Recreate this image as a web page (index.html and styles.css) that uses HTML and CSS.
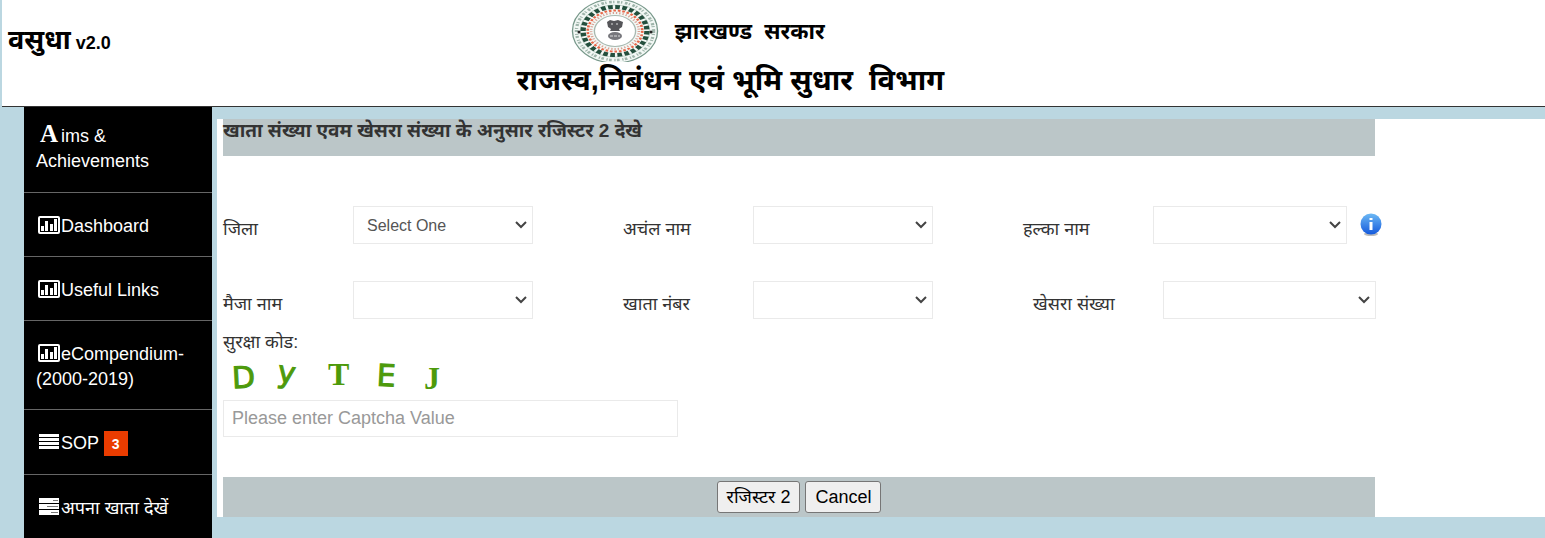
FILE: index.html
```html
<!DOCTYPE html>
<html lang="hi">
<head>
    <meta charset="UTF-8">
    <meta name="viewport" content="width=device-width, initial-scale=1.0">
    <title>वसुधा v2.0</title>
    <link rel="stylesheet" href="styles.css">
</head>
<body>

    <!-- shared icons -->
    <svg class="sprite" width="0" height="0">
        <symbol id="chart" viewBox="0 0 22 18">
            <rect x="1" y="1" width="20" height="16" rx="1" fill="none" stroke="#fff" stroke-width="2"/>
            <path d="M3 10h3v5H3zM7 5h3v10H7zM12 8h3v7h-3zM16 3h3v12h-3z" fill="#fff"/>
        </symbol>
        <symbol id="justify" viewBox="0 0 22 18">
            <path d="M1 1h20v3H1zM1 5h20v3H1zM1 9h20v3H1zM1 13h20v3H1z" fill="#fff"/>
        </symbol>
        <symbol id="tasks" viewBox="0 0 22 18">
            <path d="M1 0h20v5H1zM1 6h20v5H1zM1 12h20v5H1z" fill="#fff"/>
            <path d="M15 2.500h5M9 8.500h11M13 14.500h7" stroke="#777" stroke-width="1"/>
        </symbol>
    </svg>

    <!-- Header -->
    <header class="header">
        <div class="brand"><span class="brand-name">वसुधा</span> <span class="version">v2.0</span></div>
        <div class="title">
            <div class="title-top">
                <svg class="emblem" viewBox="0 0 88 62" role="img" aria-label="झारखण्ड सरकार">
                    <g transform="translate(44 31)">
                        <g transform="scale(1.33 1)" fill="none">
                            <circle r="32" fill="#f3f8f5" stroke="#77988a" stroke-width="1"/>
                            <circle r="29" stroke="#9fb5ab" stroke-width="2.500" stroke-dasharray="2 1 1 2"/>
                            <circle r="26" stroke="#c6d6ce" stroke-width="1"/>
                            <circle r="24" stroke="#244f3d" stroke-width="4" stroke-dasharray="3.500 1.885"/>
                            <circle r="20.500" stroke="#e8684a" stroke-width="2" stroke-dasharray="2 1.400"/>
                            <circle r="18" stroke="#d9a093" stroke-width="2" stroke-dasharray="1 1.500"/>
                            <circle r="15.500" fill="#fff" stroke="#a9b9b1" stroke-width="1"/>
                        </g>
                        <path d="M-8-9l3-2 4 1 4-1 5 2-1 5-3 2h-8l-3-2zM-4-2h8l1 2H-5z" fill="#555559"/>
                        <ellipse cy="5" rx="7" ry="4" fill="#77777c"/>
                        <path d="M-5 5h3M-1 5h3M3 5h2M-4-7h2M1-7h2" stroke="#ddd"/>
                        <circle cx="-36" cy="1" r="1.500" fill="#222"/>
                        <circle cx="36" cy="1" r="1.500" fill="#222"/>
                    </g>
                </svg>
                <span class="state">झारखण्ड&nbsp; सरकार</span>
            </div>
            <h1>राजस्व,निबंधन एवं भूमि सुधार&nbsp; विभाग</h1>
        </div>
    </header>

    <div class="page">
        <!-- Menu -->
        <nav class="sidebar">
            <a class="first" href="#"><span class="letter">A</span>ims &amp; Achievements</a>
            <a href="#"><svg class="icon"><use href="#chart"/></svg>Dashboard</a>
            <a href="#"><svg class="icon"><use href="#chart"/></svg>Useful Links</a>
            <a href="#"><svg class="icon"><use href="#chart"/></svg>eCompendium-(2000-2019)</a>
            <a href="#"><svg class="icon"><use href="#justify"/></svg>SOP <span class="badge">3</span></a>
            <a href="#"><svg class="icon"><use href="#tasks"/></svg>अपना खाता देखें</a>
        </nav>

        <!-- Form -->
        <main class="content">
            <form>
                <h2 class="bar">खाता संख्या एवम खेसरा संख्या के अनुसार रजिस्टर 2 देखे</h2>
                <div class="fields">
                    <div class="field">
                        <label for="district">जिला</label>
                        <select id="district"><option>Select One</option></select>
                    </div>
                    <div class="field">
                        <label for="circle">अचंल नाम</label>
                        <select id="circle"></select>
                    </div>
                    <div class="field halka">
                        <label for="halka">हल्का नाम</label>
                        <select id="halka"></select>
                        <svg class="info" viewBox="0 0 22 24">
                            <defs>
                                <linearGradient id="blue" x1="0" y1="0" x2="0" y2="1">
                                    <stop offset="0" stop-color="#6db9f4"/>
                                    <stop offset="1" stop-color="#1459dc"/>
                                </linearGradient>
                            </defs>
                            <ellipse cx="11" cy="21" rx="7" ry="2" fill="#bbb"/>
                            <circle cx="11" cy="11" r="10.500" fill="url(#blue)"/>
                            <path d="M9.500 5h3v2h-3zM9.500 9h3v8h-3z" fill="#fff"/>
                        </svg>
                    </div>
                    <div class="field">
                        <label for="mauja">मैजा नाम</label>
                        <select id="mauja"></select>
                    </div>
                    <div class="field">
                        <label for="khata">खाता नंबर</label>
                        <select id="khata"></select>
                    </div>
                    <div class="field khesra">
                        <label for="khesra">खेसरा संख्या</label>
                        <select id="khesra"></select>
                    </div>
                </div>

                <div class="captcha">
                    <label for="code">सुरक्षा कोड:</label>
                    <svg class="captcha-code" viewBox="0 0 230 40">
                        <text x="9" y="33" transform="rotate(-3 20 22)" class="sans">D</text>
                        <text x="54" y="28" transform="rotate(8 64 24)" class="sans">y</text>
                        <text x="105" y="30" class="serif">T</text>
                        <text x="154" y="31" transform="rotate(3 165 17)" class="sans">E</text>
                        <text x="201" y="34" class="serif">J</text>
                    </svg>
                    <input id="code" type="text" placeholder="Please enter Captcha Value">
                </div>

                <div class="bar actions">
                    <button type="submit">रजिस्टर 2</button>
                    <button type="button">Cancel</button>
                </div>
            </form>
        </main>
    </div>

</body>
</html>
```

FILE: styles.css
```css
* {
    box-sizing: border-box;
}
body {
    margin: 0;
    padding-left: 2px;
    background: #bbd7e1;
    color: #333;
    font-family: "Liberation Sans", Arial, "Noto Sans", sans-serif;
    font-size: 18px;
    line-height: 25px;
    overflow: hidden;
}
.sprite {
    display: block;
}
/* Header */
.header {
    display: grid;
    grid-template-columns: 1fr auto 1fr;
    height: 107px;
    background: #fff;
    border-bottom: 1px solid #333;
    color: #000;
    font-weight: bold;
}
.brand {
    padding: 24px 6px;
    line-height: 32px;
}
.brand-name {
    font-size: 27px;
}
.title {
    padding-right: 86px;
}
.title-top {
    display: flex;
    align-items: center;
    padding-left: 54px;
    gap: 16px;
    height: 62px;
}
.emblem {
    width: 88px;
    height: 62px;
}
.state {
    font-size: 22px;
}
h1 {
    margin: 0;
    font-size: 29px;
    line-height: 36px;
}
/* Sidebar */
.page {
    display: flex;
    align-items: flex-start;
    padding-left: 22px;
}
.sidebar {
    flex: 0 0 188px;
    background: #000;
}
.sidebar a {
    display: block;
    padding: 21px 12px 17px;
    border-bottom: 1px solid #666;
    color: #fff;
    text-decoration: none;
}
.sidebar .first {
    padding: 17px 12px 18px;
}
.letter {
    display: inline-block;
    margin: 0 3px 0 4px;
    font: bold 25px/20px "Liberation Serif", serif;
}
.icon {
    width: 22px;
    height: 18px;
    margin: 0 1px 0 2px;
    vertical-align: -2px;
}
.badge {
    padding: 5px 8px 4px;
    background: #ea3c00;
    font-size: 14px;
    font-weight: bold;
}
/* Content */
.content {
    flex: 1;
    margin: 12px 0 0 5px;
    padding-left: 6px;
    background: #fff;
}
.bar {
    margin: 0 170px 0 0;
    background: #bbc6c8;
}
h2 {
    height: 37px;
    font-size: 19px;
    line-height: 24px;
}
.fields {
    display: grid;
    grid-template-columns: repeat(3, 1fr);
    row-gap: 37px;
    margin: 50px 122px 0 0;
}
.field {
    display: flex;
    align-items: center;
}
.field label {
    flex: 0 0 130px;
    padding-top: 8px;
}
select, input {
    height: 38px;
    border: 1px solid #eaeaea;
    background: #fff;
    color: #555;
    font-family: inherit;
}
select {
    width: 180px;
    padding: 0 24px 0 13px;
    appearance: none;
    background: #fff url("data:image/svg+xml,%3Csvg xmlns='http://www.w3.org/2000/svg' width='12' height='8'%3E%3Cpath d='M1 1l5 5 5-5' fill='none' stroke='%23444' stroke-width='2'/%3E%3C/svg%3E") no-repeat right 5px center;
    font-size: 16px;
}
.halka select {
    width: 194px;
}
.khesra {
    padding-left: 10px;
}
.khesra select {
    width: 213px;
}
.info {
    width: 22px;
    height: 24px;
    margin-left: 13px;
}
.captcha {
    display: flex;
    flex-direction: column;
    align-items: flex-start;
    padding: 11px 0 40px;
}
.captcha-code {
    width: 230px;
    height: 40px;
    margin: 0 0 5px;
    fill: #4d9a0b;
}
.sans {
    font-family: "DejaVu Sans", sans-serif;
    font-size: 30px;
    stroke: #4d9a0b;
    stroke-width: 1px;
}
.serif {
    font-family: "Liberation Serif", serif;
    font-size: 32px;
    font-weight: bold;
}
input {
    width: 455px;
    height: 37px;
    padding: 0 8px;
    font-size: 18px;
}
input::placeholder {
    color: #999;
}
.actions {
    display: flex;
    justify-content: center;
    gap: 5px;
    padding: 4px 0;
}
button {
    height: 32px;
    padding: 0 9px;
    border: 1px solid #767676;
    border-radius: 3px;
    background: #efefef;
    color: #000;
    font: inherit;
}
```
